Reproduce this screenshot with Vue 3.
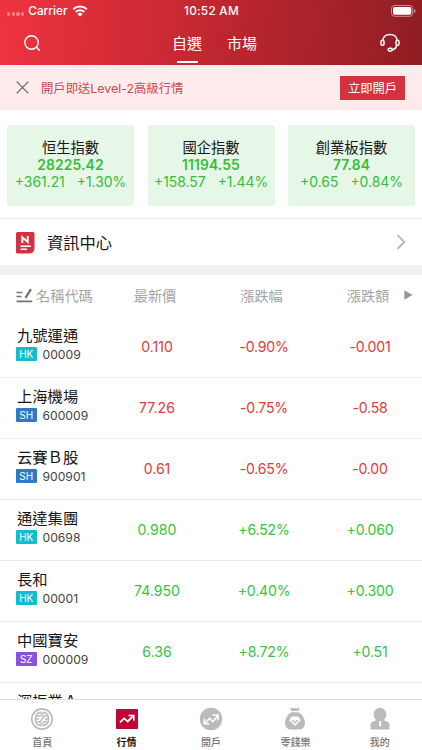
<script setup>
const indices = [
  { name: '恒生指數', value: '28225.42', change: '+361.21', pct: '+1.30%' },
  { name: '國企指數', value: '11194.55', change: '+158.57', pct: '+1.44%' },
  { name: '創業板指數', value: '77.84', change: '+0.65', pct: '+0.84%' },
]
const stocks = [
  { name: '九號運通', market: 'HK', code: '00009', price: '0.110', pct: '-0.90%', change: '-0.001' },
  { name: '上海機場', market: 'SH', code: '600009', price: '77.26', pct: '-0.75%', change: '-0.58' },
  { name: '云賽Ｂ股', market: 'SH', code: '900901', price: '0.61', pct: '-0.65%', change: '-0.00' },
  { name: '通達集團', market: 'HK', code: '00698', price: '0.980', pct: '+6.52%', change: '+0.060' },
  { name: '長和', market: 'HK', code: '00001', price: '74.950', pct: '+0.40%', change: '+0.300' },
  { name: '中國寶安', market: 'SZ', code: '000009', price: '6.36', pct: '+8.72%', change: '+0.51' },
]
const nextStock = '深振業Ａ'
</script>

<template>
  <div class="screen">
    <header class="top">
      <div class="status">
        <div class="carrier">
          <span class="dots"><i></i><i></i><i></i><i></i></span>
          <span>Carrier</span>
          <svg class="wifi" width="16" height="12" viewBox="0 0 16 12">
            <path d="M1.200 4.300a9.700 9.700 0 0 1 13.600 0M3.700 6.900a6.100 6.100 0 0 1 8.600 0" fill="none" stroke="#fff" stroke-width="2" />
            <path d="M8 11.600 5.400 9a3.700 3.700 0 0 1 5.200 0z" fill="#fff" />
          </svg>
        </div>
        <span class="time">10:52 AM</span>
        <svg class="battery" width="25" height="12" viewBox="0 0 25 12">
          <rect x=".5" y=".5" width="21.200" height="10.800" rx="3" fill="none" stroke="#fff" stroke-opacity=".5" />
          <rect x="2" y="2" width="18.300" height="7.800" rx="1.800" fill="#fff" />
          <path d="M23 4v4c1-.4 1.500-1.200 1.500-2S24 4.400 23 4z" fill="#fff" opacity=".5" />
        </svg>
      </div>
      <nav class="nav">
        <svg class="search" width="18" height="18" viewBox="0 0 18 18" fill="none" stroke="#fff" stroke-width="1.400" stroke-linecap="round">
          <circle cx="7.500" cy="7.500" r="6.700" /><path d="m12.700 12.500 2.600 2.700" />
        </svg>
        <div class="tabs">
          <span class="tab on">自選</span>
          <span class="tab">市場</span>
        </div>
        <svg class="headset" width="20" height="20" viewBox="0 0 20 20" fill="none" stroke="#fff" stroke-width="1.500">
          <path d="M2.700 7.500C3.200 3.800 6.200 1.500 10 1.500s6.800 2.300 7.300 6" />
          <rect x="1" y="7.300" width="3" height="5" rx="1.400" />
          <rect x="16" y="7.300" width="3" height="5" rx="1.400" />
          <path d="M16.800 12.300c-.6 2.500-2.200 4-4.700 4.400" />
          <rect x="8.200" y="15.200" width="4" height="2.800" rx="1.300" />
        </svg>
      </nav>
    </header>

    <section class="banner">
      <svg width="13" height="13" viewBox="0 0 13 13" stroke="#6d5f60" stroke-width="1.200"><path d="m.7.700 11.600 11.600M12.300.700.700 12.300" /></svg>
      <span class="promo">開戶即送Level-2高級行情</span>
      <button class="open">立即開戶</button>
    </section>

    <section class="cards">
      <article v-for="i in indices" :key="i.name" class="card">
        <div class="idx-name">{{ i.name }}</div>
        <div class="idx-value">{{ i.value }}</div>
        <div class="idx-change"><span>{{ i.change }}</span><span>{{ i.pct }}</span></div>
      </article>
    </section>

    <section class="news">
      <svg class="news-icon" width="19" height="22" viewBox="0 0 19 22">
        <path d="M1.500 0h15.500q1.500 0 1.500 1.500V16q0 5.500-5.500 5.500H1.500Q0 21.500 0 20V1.500Q0 0 1.500 0z" fill="#cf3440" />
        <path d="M6.300 11V5.300l5.400 4.600V4" fill="none" stroke="#fff" stroke-width="1.900" />
        <path d="M4.600 14.200h10.200M4.600 17.300h6.300" stroke="#fff" stroke-width="1.500" />
      </svg>
      <span class="news-title">資訊中心</span>
      <svg width="10" height="16" viewBox="0 0 10 16" fill="none" stroke="#b5b5b5" stroke-width="1.800"><path d="m1.500 1.200 6.800 6.800-6.800 6.800" /></svg>
    </section>

    <section class="list">
      <div class="row head">
        <div class="first">
          <svg width="17" height="15" viewBox="0 0 17 15" fill="none" stroke="#747474" stroke-width="1.700">
            <path d="M.5 4.500h6M.5 8.500h5M.5 13.400h15.700" />
            <path d="m15 1.200-5.500 8.600" stroke-width="2.300" />
          </svg>
          <span>名稱代碼</span>
        </div>
        <span>最新價</span><span>漲跌幅</span><span>漲跌額</span>
        <svg class="more" width="9" height="10" viewBox="0 0 9 10"><path d="M.3.300 8.500 5 .3 9.700z" fill="#969696" /></svg>
      </div>
      <div v-for="s in stocks" :key="s.name" class="row stock" :class="s.pct.startsWith('-') ? 'down' : 'up'">
        <div class="first">
          <div class="name">{{ s.name }}</div>
          <div class="code"><b :class="s.market.toLowerCase()">{{ s.market }}</b>{{ s.code }}</div>
        </div>
        <span>{{ s.price }}</span><span class="tight">{{ s.pct }}</span><span class="tight">{{ s.change }}</span>
      </div>
      <div class="next"><div class="name">{{ nextStock }}</div></div>
    </section>

    <footer class="bar">
      <div class="item">
        <svg width="24" height="24" viewBox="0 0 24 24" fill="none" stroke="#bbb">
          <circle cx="12" cy="12" r="10.200" stroke-width="1.700" />
          <path d="M11 4.900v4M13 4.900v4M11 15.100v4M13 15.100v4" stroke-width="1.200" />
          <path d="M10.800 5.200A7 7 0 0 0 10.800 18.800M13.200 5.200A7 7 0 0 1 13.200 18.800" stroke-width="1.700" />
          <path d="M16.500 9.700c-1.500-1.200-3.200-.8-4.500 2.300s-3 3.500-4.500 2.300M7.500 9.700c1-.9 2.200-.9 3 .1M16.500 14.300c-1 .9-2.200.9-3-.1M5 12h4M15 12h4" stroke-width="1.500" />
        </svg>
        <span>首頁</span>
      </div>
      <div class="item active">
        <svg width="24" height="24" viewBox="0 0 24 24">
          <rect x="1" y="2" width="22" height="20" rx=".8" fill="#be0638" />
          <path d="m5 15.300 4.100-3.900 3.600 3.100 5-5" fill="none" stroke="#fff" stroke-width="1.800" />
          <path d="M13.500 8.500h5.300v5.200" fill="none" stroke="#fff" stroke-width="1.600" />
        </svg>
        <span>行情</span>
      </div>
      <div class="item">
        <svg width="24" height="24" viewBox="0 0 24 24">
          <circle cx="12" cy="12" r="11.200" fill="#bbb" />
          <path d="M5.300 11.800v5h5M5.800 16.300l4.900-4.900 3.200 3.200 4.800-5.800M13.500 8h5.500v5.300" fill="none" stroke="#fff" stroke-width="1.600" />
        </svg>
        <span>開戶</span>
      </div>
      <div class="item">
        <svg width="24" height="24" viewBox="0 0 24 24">
          <path d="M8 .8q2 1 4 0 2 1 4 0 1 0 .6 1L15.500 4h-7L7.400 1.800q-.4-1 .6-1z" fill="#bbb" />
          <path d="M8.500 5.300h7C19.500 7.500 22 12 22 16c0 4-2.500 6.500-6 6.500H8c-3.500 0-6-2.500-6-6.500C2 12 4.500 7.500 8.500 5.300z" fill="#bbb" />
          <path d="M8.800 9.500h6.400l2.600 3.800L12 19l-5.800-5.700z" fill="#fff" />
          <path d="m9 13 3 2.800 3-2.800" fill="none" stroke="#bbb" stroke-width="1.300" />
        </svg>
        <span>零錢樂</span>
      </div>
      <div class="item">
        <svg width="24" height="24" viewBox="0 0 24 24">
          <path d="M12 1c3.700 0 6.300 2.600 6.300 6.300 0 2.500-1 4.700-2.600 6l4 1.500q1.800.8 1.800 3v3.400q0 1.300-1.300 1.300H3.800q-1.300 0-1.300-1.300v-3.400q0-2.200 1.800-3l4-1.500C6.700 12 5.700 9.800 5.700 7.300 5.700 3.600 8.300 1 12 1z" fill="#bbb" />
          <path d="M12.200 14v5.200" stroke="#fff" stroke-width="1.900" />
        </svg>
        <span>我的</span>
      </div>
    </footer>
  </div>
</template>

<style>
body { margin: 0; background: #fff; }
</style>

<style scoped>
.screen {
  width: 422px; height: 750px; overflow: hidden; display: flex; flex-direction: column;
  font-family: Inter, "Noto Sans CJK TC", sans-serif; color: #161616; background: #fff; white-space: nowrap;
}
svg { display: block; flex: none; }
.top { height: 65px; flex: none; background: linear-gradient(96deg, #ef3340 0%, #c12730 50%, #8f1d23 100%); color: #fff; }
.status { height: 21px; display: grid; grid-template-columns: 1fr auto 1fr; align-items: center; padding: 0 6px 0 7px; font-size: 11.800px; font-weight: 500; }
.carrier { display: flex; align-items: center; gap: 4px; }
.dots { display: flex; gap: 1.500px; padding-top: 7px; }
.dots i { width: 3.200px; height: 3.200px; border-radius: 50%; background: #ffffff60; }
.time { letter-spacing: .25px; }
.battery { justify-self: end; }
.nav { height: 44px; display: grid; grid-template-columns: 148px 1fr 42px; }
.search { margin: 14px 0 0 24px; }
.headset { margin: 12px 0 0; }
.tabs { display: flex; gap: 25px; padding-left: 24px; font-size: 15px; line-height: 44px; font-family: "Noto Sans CJK TC", sans-serif; }
.tab { display: flex; flex-direction: column; align-items: center; height: 44px; }
.tab.on::after { content: ""; width: 21px; height: 2px; margin-top: -4px; background: #fff; flex: none; }
.banner { height: 45px; flex: none; background: #feecec; display: flex; align-items: center; padding: 0 17px 0 16px; color: #cf4650; font-size: 12.350px; box-sizing: border-box; }
.promo { margin-left: 12px; flex: 1; }
.open { width: 65px; height: 24px; border: 0; padding: 0; background: #d4323e; color: #fff; font: 12.300px/24px "Noto Sans CJK TC", sans-serif; }
.cards { height: 109px; flex: none; box-sizing: border-box; padding: 14.500px 7px 0; display: flex; justify-content: space-between; border-bottom: 1px solid #ececee; }
.card { width: 127px; height: 81.500px; box-sizing: border-box; padding-top: 13.500px; border-radius: 3px; background: #e6f7e7; text-align: center; color: #34bd39; }
.idx-name { font-size: 14.300px; line-height: 19px; color: #161616; }
.idx-value { font-size: 13.800px; line-height: 16px; font-weight: 600; letter-spacing: .15px; }
.idx-change { font-size: 13.900px; line-height: 19px; display: flex; justify-content: center; gap: 12px; }
.news { height: 56px; flex: none; box-sizing: border-box; border-bottom: 10px solid #f0f0f5; display: flex; align-items: center; padding: 0 16px; }
.news-icon { margin-top: 1px; }
.news-title { flex: 1; font-size: 16.300px; margin-left: 12px; }
.list { flex: 1; min-height: 0; overflow: hidden; }
.row { display: grid; grid-template-columns: 104px 106px 108px 104px; align-items: center; text-align: center; box-sizing: border-box; }
.head { height: 42px; padding-bottom: 2px; font-size: 14.200px; color: #a5a5a5; grid-template-columns: 102px 106px 107px 106px 1px; }
.head .first { display: flex; align-items: center; gap: 3px; }
.first { padding-left: 16px; text-align: left; }
.more { margin-left: -17px; }
.stock { height: 61px; border-bottom: 1px solid #ececee; font-size: 14.100px; }
.stock > span { padding-bottom: 1px; }
.stock .first { padding-bottom: 7px; }
.tight { letter-spacing: -.2px; }
.name { font-size: 15.300px; line-height: 19px; color: #161616; padding-left: 1px; }
.next { padding: 9px 0 0 16px; }
.code { display: flex; align-items: center; gap: 6px; margin-top: 2px; font-size: 12.150px; line-height: 15px; color: #434343; }
.code b { width: 20.500px; height: 14px; line-height: 14px; font-size: 10px; font-weight: 400; text-align: center; color: #fff; border-radius: 1px; }
.hk { background: #13bdd0; }
.sh { background: #2e7ac6; }
.sz { background: #8852dc; }
.down { color: #e23a3a; }
.up { color: #35c53a; }
.bar { height: 51px; flex: none; box-sizing: border-box; border-top: 1px solid #dedede; background: #fff; display: grid; grid-template-columns: repeat(5, 1fr); }
.item { display: flex; flex-direction: column; align-items: center; padding-top: 7px; gap: 4px; font-size: 10px; line-height: 14px; font-weight: 500; color: #767676; }
.active { color: #151515; font-weight: 700; }
</style>
